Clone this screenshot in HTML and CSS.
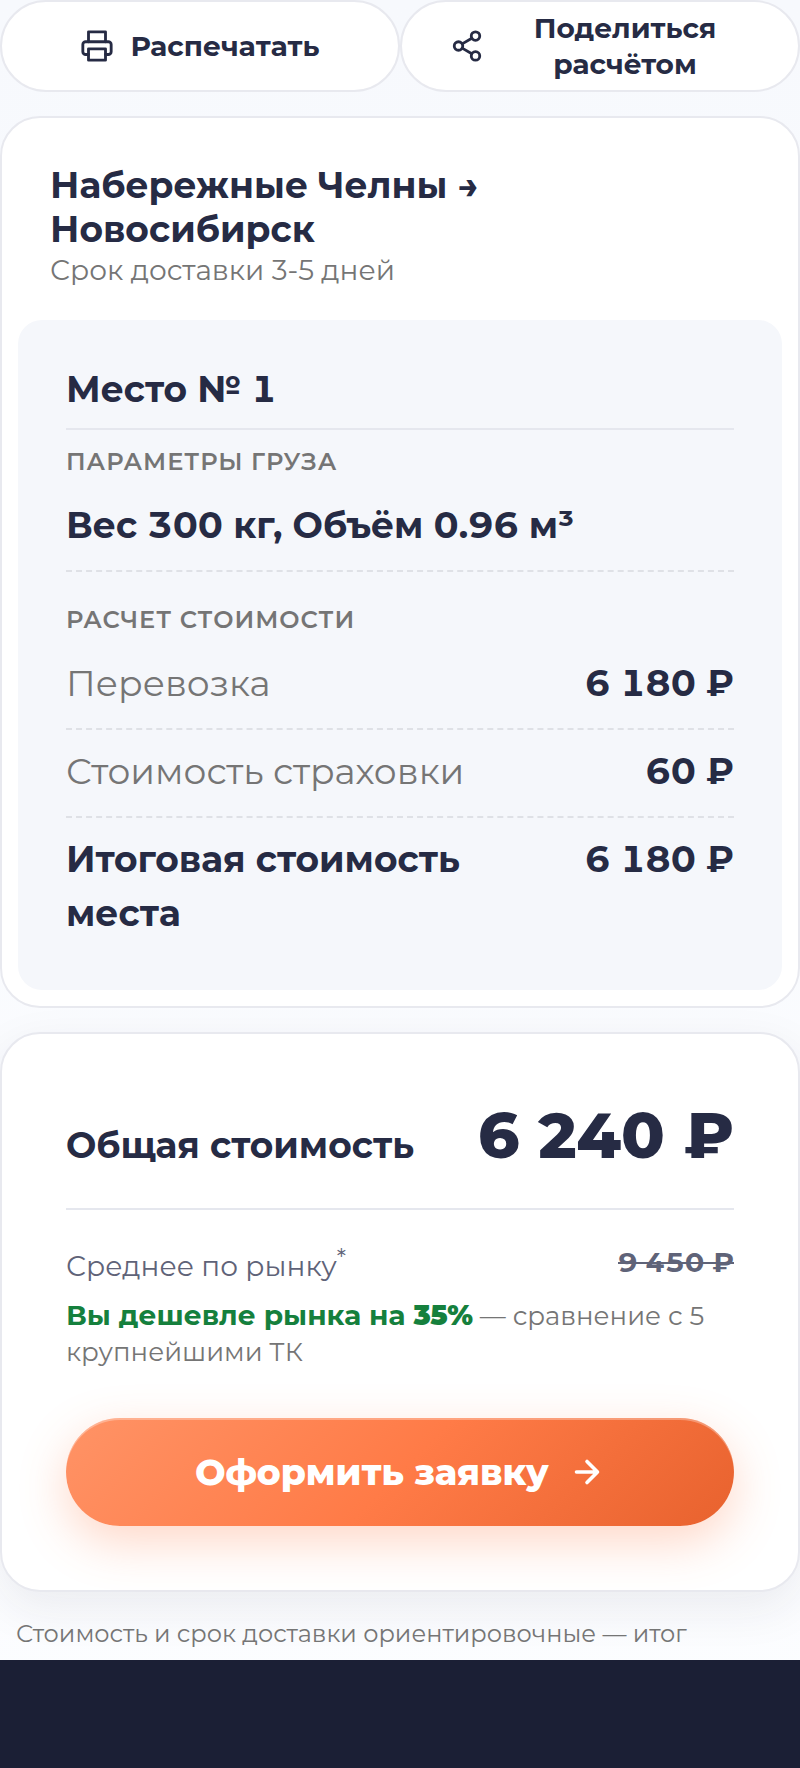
FILE: index.html
```html
<!DOCTYPE html>
<html lang="ru">
<head>
    <meta charset="UTF-8">
    <meta name="viewport" content="width=device-width, initial-scale=1.0">
    <title>Расчёт стоимости доставки</title>
    <link rel="stylesheet" href="styles.css">
</head>
<body>
    <main class="result">
        <div class="actions">
            <button type="button" class="action-btn">
                <svg class="action-icon" viewBox="0 0 24 24" aria-hidden="true">
                    <path d="M6 9V2h12v7"/>
                    <path d="M6 18H4a2 2 0 0 1-2-2v-5a2 2 0 0 1 2-2h16a2 2 0 0 1 2 2v5a2 2 0 0 1-2 2h-2"/>
                    <path d="M6 14h12v8H6z"/>
                </svg>
                <span>Распечатать</span>
            </button>
            <button type="button" class="action-btn">
                <svg class="action-icon" viewBox="0 0 24 24" aria-hidden="true">
                    <circle cx="18" cy="5" r="3"/>
                    <circle cx="6" cy="12" r="3"/>
                    <circle cx="18" cy="19" r="3"/>
                    <path d="M8.6 13.5l6.8 4M15.4 6.5l-6.8 4"/>
                </svg>
                <span>Поделиться расчётом</span>
            </button>
        </div>

        <section class="card route-card">
            <header class="route-header">
                <h2 class="route-title">Набережные Челны →<br>Новосибирск</h2>
                <p class="route-term">Срок доставки 3-5 дней</p>
            </header>

            <div class="place">
                <h3 class="place-title">Место № 1</h3>
                <h4 class="place-label">Параметры груза</h4>
                <div class="row"><strong>Вес 300 кг, Объём 0.96 м³</strong></div>
                <h4 class="place-label place-label-cost">Расчет стоимости</h4>
                <div class="row">
                    <span class="row-name">Перевозка</span>
                    <strong class="row-value">6&nbsp;180&nbsp;₽</strong>
                </div>
                <div class="row">
                    <span class="row-name">Стоимость страховки</span>
                    <strong class="row-value">60&nbsp;₽</strong>
                </div>
                <div class="row">
                    <strong class="row-total">Итоговая стоимость места</strong>
                    <strong class="row-value">6&nbsp;180&nbsp;₽</strong>
                </div>
            </div>
        </section>

        <section class="card total-card">
            <div class="total">
                <h2 class="total-name">Общая стоимость</h2>
                <strong class="total-price">6&nbsp;240&nbsp;₽</strong>
            </div>
            <div class="market">
                <span>Среднее по рынку<sup>*</sup></span>
                <s class="market-price">9&nbsp;450&nbsp;₽</s>
            </div>
            <p class="saving"><strong>Вы дешевле рынка на <b>35%</b></strong> — сравнение с 5 крупнейшими ТК</p>
            <button type="button" class="order-btn">
                <span>Оформить заявку</span>
                <svg class="order-icon" viewBox="0 0 24 24" aria-hidden="true">
                    <path d="M5 12h14M12 5l7 7-7 7"/>
                </svg>
            </button>
        </section>

        <p class="note">Стоимость и срок доставки ориентировочные — итог</p>
    </main>
    <footer class="bottom-bar"></footer>
</body>
</html>
```
FILE: styles.css
```css
* {
    box-sizing: border-box;
}

body {
    margin: 0;
    min-height: 100vh;
    display: flex;
    flex-direction: column;
    font-family: Montserrat, Inter, sans-serif;
    font-size: 36px;
    line-height: 54px;
    color: #262b44;
    background: linear-gradient(180deg, #f7f9fd 0%, #fcfdff 100%);
}

h2, h3, h4, p {
    margin: 0;
}

strong {
    font-weight: 700;
}

button {
    font-family: inherit;
    cursor: pointer;
}

svg {
    fill: none;
    stroke: currentColor;
    stroke-linecap: round;
    stroke-linejoin: round;
    flex-shrink: 0;
}

.result {
    flex: 1;
    display: flex;
    flex-direction: column;
    gap: 24px;
}

.actions {
    display: grid;
    grid-template-columns: 1fr 1fr;
}

.action-btn {
    min-height: 92px;
    display: flex;
    align-items: center;
    justify-content: center;
    gap: 16px;
    padding: 8px 48px;
    border: 2px solid #e8e9ef;
    border-radius: 46px;
    background: #fff;
    color: #262b44;
    font-size: 28px;
    font-weight: 700;
    line-height: 36px;
}

.action-icon {
    width: 34px;
    height: 34px;
    stroke-width: 2;
}

.card {
    border: 2px solid #e8e9ef;
    border-radius: 40px;
    background: #fff;
}

.route-card {
    padding: 16px;
}

.route-header {
    padding: 29px 32px 31px;
}

.route-title {
    font-size: 36px;
    line-height: 44px;
}

.route-term {
    font-size: 28px;
    line-height: 38px;
    color: #757575;
}

.place {
    padding: 32px 48px;
    border-radius: 24px;
    background: #f5f7fb;
    font-variant-numeric: tabular-nums;
}

.place-title {
    padding: 10px 0 12px;
    border-bottom: 2px solid #e5e7ee;
    font-size: 36px;
}

.place-label {
    padding: 14px 0 4px;
    font-size: 24px;
    font-weight: 600;
    line-height: 36px;
    letter-spacing: 1px;
    text-transform: uppercase;
    color: #757575;
}

.place-label-cost {
    padding-top: 30px;
}

.row {
    display: flex;
    justify-content: space-between;
    gap: 48px;
    padding: 14px 0 18px;
    border-bottom: 2px dashed #dfe1e6;
}

.row:last-child {
    border-bottom: none;
}

.row-name {
    color: #757575;
}

.row-total {
    max-width: 420px;
}

.row-value {
    white-space: nowrap;
}

.total-card {
    padding: 62px 64px 64px;
    box-shadow: 0 16px 48px rgba(38, 43, 68, 0.08);
}

.total {
    display: flex;
    align-items: baseline;
    justify-content: space-between;
    padding-bottom: 34px;
    border-bottom: 2px solid #e5e7ee;
}

.total-name {
    font-size: 36px;
}

.total-price {
    font-size: 64px;
    font-weight: 800;
    line-height: 78px;
}

.market {
    display: flex;
    justify-content: space-between;
    padding-top: 31px;
    font-size: 28px;
    line-height: 42px;
    color: #5f6378;
}

.market sup {
    font-size: 24px;
    line-height: 34px;
}

.market-price {
    font-weight: 700;
    font-variant-numeric: tabular-nums;
}

.saving {
    padding: 10px 0 48px;
    font-size: 26px;
    line-height: 36px;
    color: #757575;
}

.saving strong {
    font-size: 28px;
    color: #15803d;
}

.saving b {
    font-weight: 900;
}

.order-btn {
    width: 100%;
    min-height: 108px;
    display: flex;
    align-items: center;
    justify-content: center;
    gap: 20px;
    border: none;
    border-radius: 54px;
    background: linear-gradient(135deg, #ff9366 0%, #ff7b47 50%, #e8622e 100%);
    box-shadow: 0 16px 48px rgba(255, 123, 71, 0.3), inset 0 2px 0 rgba(255, 255, 255, 0.3);
    color: #fff;
    font-size: 36px;
    font-weight: 800;
}

.order-icon {
    width: 36px;
    height: 36px;
    stroke-width: 2.4;
}

.note {
    padding: 0 16px;
    font-size: 24px;
    line-height: 36px;
    color: #757575;
}

.bottom-bar {
    height: 108px;
    background: #1b1f35;
}
```
